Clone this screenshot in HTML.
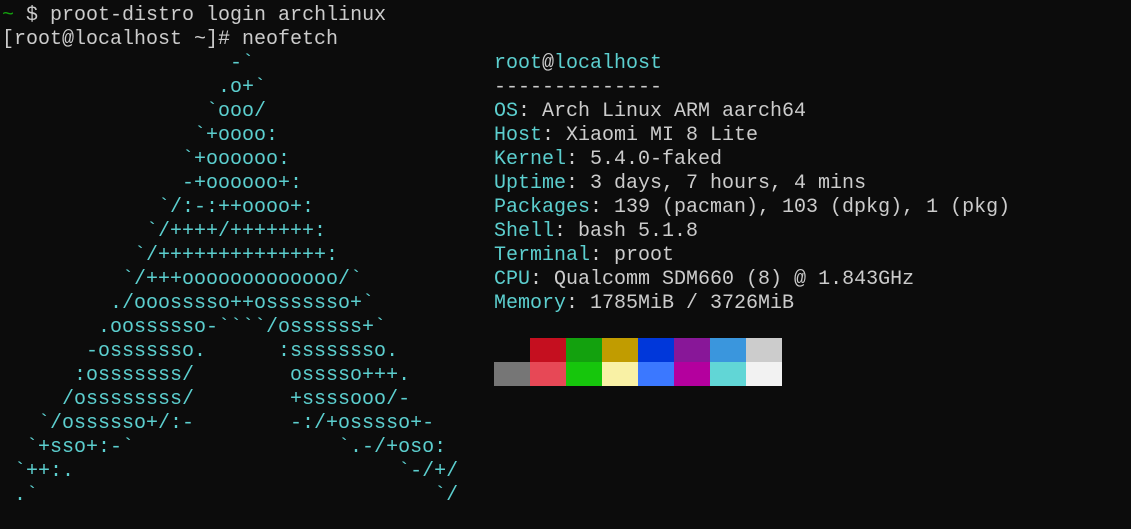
<!DOCTYPE html>
<html><head><meta charset="utf-8"><style>
html,body{margin:0;padding:0;background:#0c0c0c;width:1131px;height:529px;overflow:hidden}
pre{margin:0;position:absolute;font-family:"Liberation Mono",monospace;font-size:20px;line-height:24px;color:#cccccc;white-space:pre}
.c{color:#5ccfcf}.g{color:#13a10e}
.b{position:absolute;width:36px;height:24px}
</style></head><body>
<pre style="left:2px;top:4px"><span class="g">~</span> $ proot-distro login archlinux
[root@localhost ~]# neofetch
<span class="c">                   -&#96;
                  .o+&#96;
                 &#96;ooo/
                &#96;+oooo:
               &#96;+oooooo:
               -+oooooo+:
             &#96;/:-:++oooo+:
            &#96;/++++/+++++++:
           &#96;/++++++++++++++:
          &#96;/+++ooooooooooooo/&#96;
         ./ooosssso++osssssso+&#96;
        .oossssso-&#96;&#96;&#96;&#96;/ossssss+&#96;
       -osssssso.      :ssssssso.
      :osssssss/        osssso+++.
     /ossssssss/        +ssssooo/-
   &#96;/ossssso+/:-        -:/+osssso+-
  &#96;+sso+:-&#96;                 &#96;.-/+oso:
 &#96;++:.                           &#96;-/+/
 .&#96;                                 &#96;/</span></pre>
<pre style="left:494px;top:52px"><span class="c">root</span>@<span class="c">localhost</span>
--------------
<span class="c">OS</span>: Arch Linux ARM aarch64
<span class="c">Host</span>: Xiaomi MI 8 Lite
<span class="c">Kernel</span>: 5.4.0-faked
<span class="c">Uptime</span>: 3 days, 7 hours, 4 mins
<span class="c">Packages</span>: 139 (pacman), 103 (dpkg), 1 (pkg)
<span class="c">Shell</span>: bash 5.1.8
<span class="c">Terminal</span>: proot
<span class="c">CPU</span>: Qualcomm SDM660 (8) @ 1.843GHz
<span class="c">Memory</span>: 1785MiB / 3726MiB</pre>
<div class="b" style="left:494px;top:338px;background:#0c0c0c"></div>
<div class="b" style="left:530px;top:338px;background:#c50f1f"></div>
<div class="b" style="left:566px;top:338px;background:#13a10e"></div>
<div class="b" style="left:602px;top:338px;background:#c19c00"></div>
<div class="b" style="left:638px;top:338px;background:#0037da"></div>
<div class="b" style="left:674px;top:338px;background:#881798"></div>
<div class="b" style="left:710px;top:338px;background:#3a96dd"></div>
<div class="b" style="left:746px;top:338px;background:#cccccc"></div>
<div class="b" style="left:494px;top:362px;background:#767676"></div>
<div class="b" style="left:530px;top:362px;background:#e74856"></div>
<div class="b" style="left:566px;top:362px;background:#16c60c"></div>
<div class="b" style="left:602px;top:362px;background:#f9f1a5"></div>
<div class="b" style="left:638px;top:362px;background:#3b78ff"></div>
<div class="b" style="left:674px;top:362px;background:#b4009e"></div>
<div class="b" style="left:710px;top:362px;background:#61d6d6"></div>
<div class="b" style="left:746px;top:362px;background:#f2f2f2"></div>
</body></html>
